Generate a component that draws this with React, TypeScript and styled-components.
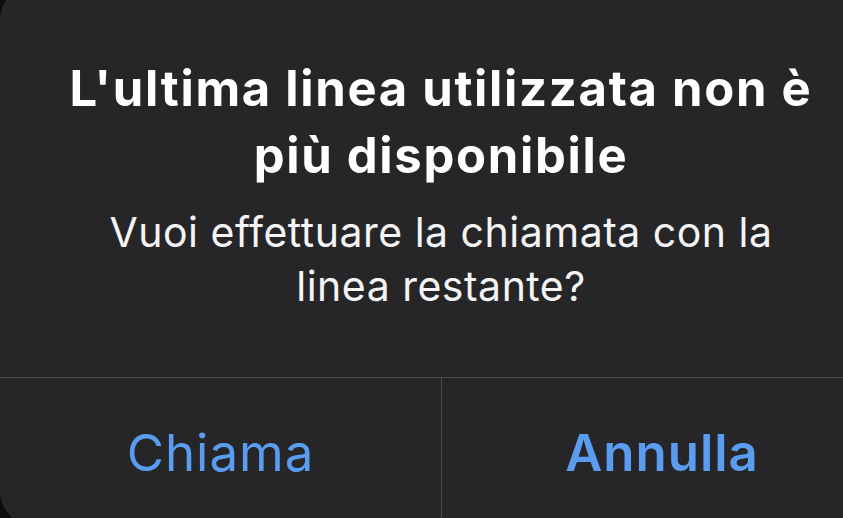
import styled, { createGlobalStyle } from "styled-components";

const GlobalStyle = createGlobalStyle`
    html, body {
        margin: 0;
        padding: 0;
        background: #0d0d0f;
        overflow: hidden;
    }
    #root {
        width: 843px;
        height: 518px;
        overflow: hidden;
    }
`;

const font = `Inter, "Liberation Sans", Arial, sans-serif`;

const Alert = styled.div`
    width: 882px;
    height: 543px;
    margin-top: -16px;
    border-radius: 36px;
    background: #262628;
    display: flex;
    flex-direction: column;
    overflow: hidden;
`;

const Body = styled.div`
    height: 394px;
    box-sizing: border-box;
    padding-top: 71px;
    display: flex;
    flex-direction: column;
    align-items: center;
    gap: 16px;
    border-bottom: 1px solid #4b4b4d;
    text-align: center;
`;

const Title = styled.h1`
    margin: 0;
    font-family: ${font};
    font-weight: 700;
    font-size: 49px;
    line-height: 67px;
    letter-spacing: 1.7px;
    color: #ffffff;
    width: 800px;
`;

const Message = styled.p`
    margin: 0;
    font-family: ${font};
    font-weight: 400;
    font-size: 41px;
    line-height: 54px;
    letter-spacing: 0.5px;
    color: #f4f4f4;
    width: 700px;
`;

const Actions = styled.div`
    flex: 1;
    display: grid;
    grid-template-columns: 1fr 1fr;
`;

const Action = styled.button<{ $bold?: boolean }>`
    border: none;
    background: transparent;
    padding: 0;
    display: flex;
    align-items: center;
    justify-content: center;
    font-family: ${font};
    font-size: 51px;
    letter-spacing: 1px;
    font-weight: ${p => (p.$bold ? 600 : 400)};
    color: #5a9cf0;
    & + & {
        border-left: 1px solid #4b4b4d;
    }
`;

export default function App() {
    return (
        <>
            <GlobalStyle />
            <Alert>
                <Body>
                    <Title>L'ultima linea utilizzata non è più disponibile</Title>
                    <Message>Vuoi effettuare la chiamata con la linea restante?</Message>
                </Body>
                <Actions>
                    <Action>Chiama</Action>
                    <Action $bold>Annulla</Action>
                </Actions>
            </Alert>
        </>
    );
}
